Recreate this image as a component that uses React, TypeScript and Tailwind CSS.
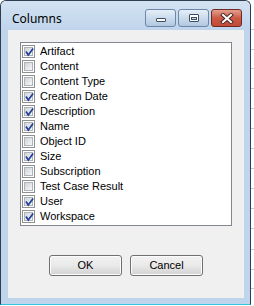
import React from "react";

const items: [string, boolean][] = [
  ["Artifact", true],
  ["Content", false],
  ["Content Type", false],
  ["Creation Date", true],
  ["Description", true],
  ["Name", true],
  ["Object ID", false],
  ["Size", true],
  ["Subscription", false],
  ["Test Case Result", false],
  ["User", true],
  ["Workspace", true],
];

function Check({ checked }: { checked: boolean }) {
  return (
    <div className="relative w-[13px] h-[13px] border border-[#8e8f8f] bg-white p-[1px] shrink-0">
      <div className="w-full h-full border border-[#aeb3b9] bg-gradient-to-br from-[#cfd3d8] to-[#f7f7f7]" />
      {checked && (
        <svg className="absolute left-[1px] top-[1px]" width="11" height="11" viewBox="0 0 11 11">
          <path d="M2.5 5.2 L4.3 8 L8.6 2.2" stroke="#21409a" strokeWidth="1.7" fill="none" strokeLinecap="square" />
        </svg>
      )}
    </div>
  );
}

function WinButton({ label }: { label: string }) {
  return (
    <div className="w-[73px] h-[21px] rounded-[3px] border border-[#707070] bg-gradient-to-b from-[#f2f2f2] via-[#e9e9e9] to-[#d2d2d2] flex items-center justify-center text-[11px] text-black shadow-[inset_0_0_0_1px_#fcfcfc]">
      {label}
    </div>
  );
}

export default function App() {
  const ticks = [29, 49, 68, 88, 108, 128, 148, 168, 188, 208, 228, 249, 269, 288];
  return (
    <div className="relative w-[254px] h-[306px] bg-white overflow-hidden font-['Liberation_Sans',sans-serif]">
      {ticks.map((t) => (
        <div key={t} className="absolute right-0 w-[3px] h-px bg-[#c9c9c9]" style={{ top: t }} />
      ))}
      <div className="w-[251px] h-[305px] flex flex-col rounded-t-[6px] border border-[#2f3d4e] border-b-[#34c3dc] bg-[#bfd5ec]">
        <div className="h-[29px] flex items-start rounded-t-[5px] bg-gradient-to-b from-[#d3e2f2] to-[#bfd5ec]">
          <div className="pl-[11px] pt-[10px] text-[12px] leading-[16px] text-black font-['Noto_Sans',sans-serif]">
            Columns
          </div>
          <div className="ml-auto mr-[8px] mt-[8px] flex gap-[2px]">
            <div className="w-[31px] h-[18px] rounded-[3px] border border-[#6c87a9] bg-gradient-to-b from-[#e6eef7] via-[#cbdbec] to-[#b2c8e0] flex items-end justify-center pb-[4px]">
              <div className="w-[10px] h-[4px] bg-white border border-[#3c4d62] rounded-[1px]" />
            </div>
            <div className="w-[31px] h-[18px] rounded-[3px] border border-[#6c87a9] bg-gradient-to-b from-[#e6eef7] via-[#cbdbec] to-[#b2c8e0] flex items-center justify-center">
              <div className="w-[10px] h-[8px] bg-white border border-[#3c4d62] rounded-[1px] flex items-center justify-center">
                <div className="w-[6px] h-[3px] border border-[#3c4d62] bg-[#c9d6e4]" />
              </div>
            </div>
            <div className="w-[31px] h-[18px] rounded-[3px] border border-[#6e2a22] bg-gradient-to-b from-[#e3a08f] via-[#cc5a45] to-[#c14a35] flex items-center justify-center">
              <svg width="14" height="11" viewBox="0 0 14 11">
                <path d="M3 2 L11 9 M11 2 L3 9" stroke="#4a2a26" strokeWidth="4" strokeLinecap="square" fill="none" />
                <path d="M3 2 L11 9 M11 2 L3 9" stroke="#ffffff" strokeWidth="2" strokeLinecap="square" fill="none" />
              </svg>
            </div>
          </div>
        </div>
        <div className="ml-[7px] mr-[6px] h-[268px] bg-[#f0f0f0] flex flex-col">
          <div className="mt-[12px] ml-[12px] w-[212px] h-[184px] border border-[#828790] bg-white pt-[1px] pl-[1px] flex flex-col">
            {items.map(([name, checked]) => (
              <div key={name} className="h-[15px] flex items-center gap-[5px] text-[11px] text-black leading-none">
                <Check checked={checked} />
                <span>{name}</span>
              </div>
            ))}
          </div>
          <div className="mt-[29px] flex justify-center gap-[8px]">
            <WinButton label="OK" />
            <WinButton label="Cancel" />
          </div>
        </div>
      </div>
    </div>
  );
}
